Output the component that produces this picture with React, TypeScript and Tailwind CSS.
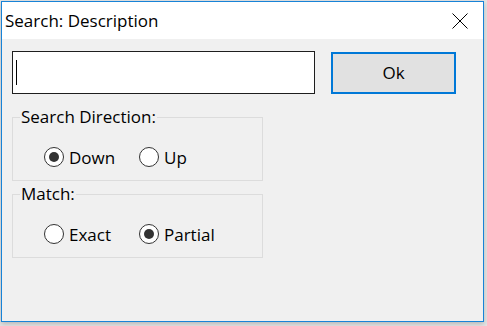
import React, { useState } from 'react';

const font = { fontFamily: '"Segoe UI", "Open Sans", "Noto Sans", sans-serif' };

function Radio({ label, checked, onClick, width }: { label: string; checked: boolean; onClick: () => void; width?: string }) {
  return (
    <button type="button" onClick={onClick} className={`flex items-center gap-[5px] text-[17px] text-black ${width ?? ''}`}>
      <span className="flex h-[20px] w-[20px] shrink-0 items-center justify-center rounded-full border border-[#333] bg-white">
        {checked && <span className="h-[10px] w-[10px] rounded-full bg-[#333]" />}
      </span>
      <span className="leading-none">{label}</span>
    </button>
  );
}

function Group({ title, children }: { title: string; children: React.ReactNode }) {
  return (
    <fieldset className="w-[251px] rounded-none border border-[#dcdcdc] px-0 pb-[13px]">
      <legend className="ml-[7px] px-[1px] text-[17px] leading-[20px] text-black">{title}</legend>
      <div className="mt-[20px] flex pl-[31px]">{children}</div>
    </fieldset>
  );
}

export default function App() {
  const [dir, setDir] = useState<'down' | 'up'>('down');
  const [match, setMatch] = useState<'exact' | 'partial'>('partial');

  return (
    <div className="h-[326px] w-[487px] overflow-hidden bg-[#e4e4e4] pl-[1px] pt-[1px]" style={font}>
      <div className="flex h-[321px] w-[483px] flex-col bg-[#1883d7] p-[1px] shadow-[0_2px_5px_rgba(0,0,0,0.2)]">
        {/* title bar */}
        <div className="flex h-[37px] shrink-0 items-center justify-between bg-white pl-[3px] pr-[15px]">
          <span className="text-[17px] text-black">Search: Description</span>
          <svg width="16" height="16" viewBox="0 0 16 16" className="text-black">
            <path d="M0.5 0.5 L15.5 15.5 M15.5 0.5 L0.5 15.5" stroke="currentColor" strokeWidth="1" fill="none" />
          </svg>
        </div>

        <div className="flex flex-1 flex-col bg-[#f0f0f0] pl-[10px] pt-[12px]">
          <div className="flex gap-[16px]">
            <div className="flex h-[43px] w-[303px] items-center border border-[#1e1e1e] bg-white pl-[3px]">
              <span className="h-[25px] w-[1px] bg-black" />
            </div>
            <button className="mt-[1px] h-[42px] w-[125px] border-2 border-[#0078d7] bg-[#e1e1e1] text-[17px] text-black">
              Ok
            </button>
          </div>

          <div className="mt-[13px]">
            <Group title="Search Direction:">
              <Radio label="Down" width="w-[95px]" checked={dir === 'down'} onClick={() => setDir('down')} />
              <Radio label="Up" checked={dir === 'up'} onClick={() => setDir('up')} />
            </Group>
          </div>

          <div className="mt-[3px]">
            <Group title="Match:">
              <Radio label="Exact" width="w-[95px]" checked={match === 'exact'} onClick={() => setMatch('exact')} />
              <Radio label="Partial" checked={match === 'partial'} onClick={() => setMatch('partial')} />
            </Group>
          </div>
        </div>
      </div>
    </div>
  );
}
